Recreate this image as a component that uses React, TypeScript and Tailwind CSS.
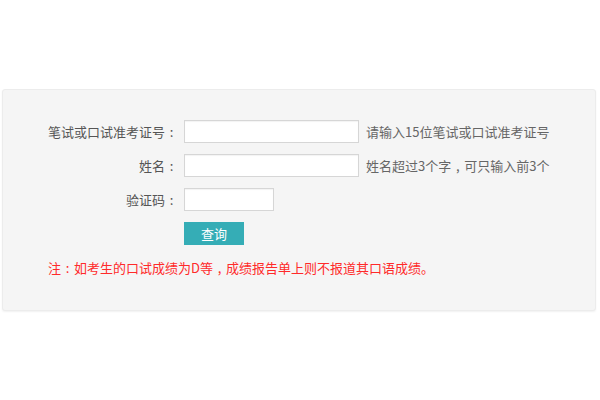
import React from "react";

const font = { fontFamily: '"Noto Sans CJK SC", "Microsoft YaHei", sans-serif' };

function Colon() {
  return <span className="inline-block w-[13px] text-center">:</span>;
}
function Comma() {
  return <span className="inline-block w-[13px] text-center">,</span>;
}

function Row({ label, inputW, hint }: { label: string; inputW: string; hint?: React.ReactNode }) {
  return (
    <div className="flex items-center h-[23px]">
      <div className="w-[175px] text-right text-[13px] text-[#555] leading-[23px]">
        {label}
        <Colon />
      </div>
      <input
        className={`ml-[6px] h-[23px] ${inputW} border border-[#d6d6d6] bg-white shadow-[inset_0_1px_1px_rgba(0,0,0,0.05)] outline-none`}
      />
      {hint && <div className="ml-[7px] text-[13px] text-[#666] leading-[23px]">{hint}</div>}
    </div>
  );
}

export default function App() {
  return (
    <div className="w-[600px] h-[400px] bg-white overflow-hidden" style={font}>
      <div className="ml-[2px] mt-[89px] w-[594px] h-[222px] bg-[#f5f5f5] border border-[#ececec] rounded-[3px] shadow-[0_1px_2px_rgba(0,0,0,0.06)] pt-[30px]">
        <div className="flex flex-col gap-[11px]">
          <Row label="笔试或口试准考证号" inputW="w-[175px]" hint="请输入15位笔试或口试准考证号" />
          <Row
            label="姓名"
            inputW="w-[175px]"
            hint={
              <>
                姓名超过3个字
                <Comma />
                可只输入前3个
              </>
            }
          />
          <Row label="验证码" inputW="w-[90px]" />
          <div className="flex">
            <button className="ml-[181px] w-[60px] h-[23px] bg-[#35adb6] text-white text-[13px] leading-[23px]">
              查询
            </button>
          </div>
        </div>
        <div className="ml-[45px] mt-[13px] text-[13px] leading-[20px] text-[#ff2a2a]">
          注<Colon />如考生的口试成绩为D等<Comma />成绩报告单上则不报道其口语成绩。
        </div>
      </div>
    </div>
  );
}
